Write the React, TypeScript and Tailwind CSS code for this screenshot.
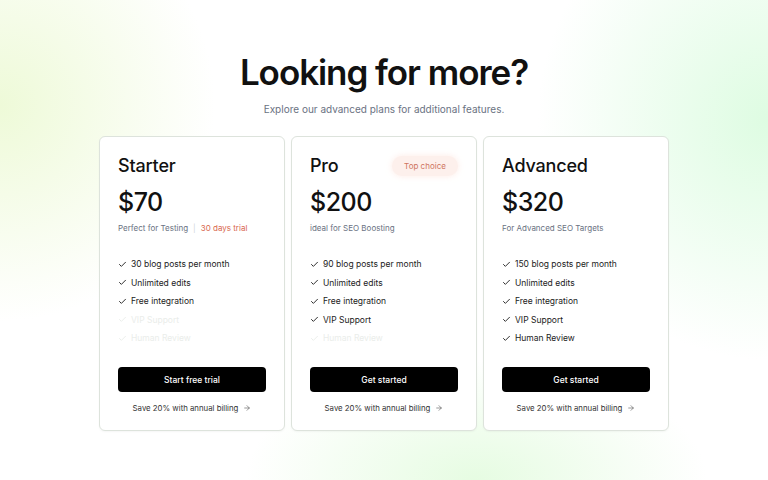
import { ArrowRight, Check } from "lucide-react";

interface Plan {
  name: string;
  price: string;
  posts: number;
  tagline: React.ReactNode;
  cta: string;
  badge?: string;
  included: number;
}

const FEATURES = [
  "blog posts per month",
  "Unlimited edits",
  "Free integration",
  "VIP Support",
  "Human Review",
];

const PLANS: Plan[] = [
  {
    name: "Starter",
    price: "$70",
    posts: 30,
    included: 3,
    cta: "Start free trial",
    tagline: (
      <>
        Perfect for Testing
        <span className="mx-[5px] text-gray-300">|</span>
        <span className="text-[#d9684f]">30 days trial</span>
      </>
    ),
  },
  {
    name: "Pro",
    price: "$200",
    posts: 90,
    included: 4,
    cta: "Get started",
    badge: "Top choice",
    tagline: "ideal for SEO Boosting",
  },
  {
    name: "Advanced",
    price: "$320",
    posts: 150,
    included: 5,
    cta: "Get started",
    tagline: "For Advanced SEO Targets",
  },
];

function PlanCard({ plan }: { plan: Plan }) {
  return (
    <div className="flex flex-col rounded-[6px] border border-[#dde3dc] bg-white px-[18px] pt-[18px] pb-[16px] shadow-[0_1px_2px_rgba(0,0,0,0.04)]">
      <div className="flex h-[22px] items-center justify-between">
        <h3 className="text-[18px] leading-[22px] font-medium tracking-[-0.01em] text-[#111]">
          {plan.name}
        </h3>
        {plan.badge && (
          <span className="flex h-[20px] w-[66px] items-center justify-center rounded-full bg-[#fdf0ec] text-[8px] text-[#cf7560] shadow-[0_0_6px_rgba(253,220,210,0.6)]">
            {plan.badge}
          </span>
        )}
      </div>
      <div className="mt-[10px] text-[25px] leading-[30px] font-medium tracking-[-0.02em] text-[#111]">
        {plan.price}
      </div>
      <p className="mt-[5px] text-[8px] leading-[12px] text-gray-500">
        {plan.tagline}
      </p>
      <ul className="mt-[24px] flex flex-col gap-[6.6px]">
        {FEATURES.map((f, i) => {
          const on = i < plan.included;
          return (
            <li
              key={f}
              className={
                "flex h-[12px] items-center gap-[4px] text-[8.5px] leading-[12px] " +
                (on ? "text-[#222]" : "text-[#eaedea]")
              }
            >
              <Check size={9} strokeWidth={2.5} className="shrink-0" />
              <span>{i === 0 ? `${plan.posts} ${f}` : f}</span>
            </li>
          );
        })}
      </ul>
      <button className="mt-[23px] h-[25px] w-full rounded-[4px] bg-black text-[8.5px] font-medium text-white">
        {plan.cta}
      </button>
      <div className="mt-[10px] flex h-[12px] items-center justify-center gap-[5px] text-[7.8px] leading-[12px] text-[#333]">
        Save 20% with annual billing
        <ArrowRight size={8} strokeWidth={1.5} />
      </div>
    </div>
  );
}

export default function App() {
  return (
    <div
      className="min-h-[480px] w-full bg-white bg-[radial-gradient(ellipse_28%_45%_at_0%_22%,#eefad8_0%,rgba(255,255,255,0)_100%),radial-gradient(ellipse_30%_50%_at_100%_25%,#defce2_0%,rgba(255,255,255,0)_100%),radial-gradient(ellipse_30%_25%_at_62%_100%,#e6fce2_0%,rgba(255,255,255,0)_100%)]"
      style={{ fontFamily: "Inter, 'Noto Sans', sans-serif" }}
    >
      <div className="flex flex-col items-center pt-[52px]">
        <h1 className="text-[35px] leading-[40px] font-semibold tracking-[-0.03em] text-[#111]">
          Looking for more?
        </h1>
        <p className="mt-[10px] text-[10px] leading-[14px] text-gray-500">
          Explore our advanced plans for additional features.
        </p>
        <div className="mt-[20px] grid w-[570px] grid-cols-3 gap-[6px]">
          {PLANS.map((p) => (
            <PlanCard key={p.name} plan={p} />
          ))}
        </div>
      </div>
    </div>
  );
}
